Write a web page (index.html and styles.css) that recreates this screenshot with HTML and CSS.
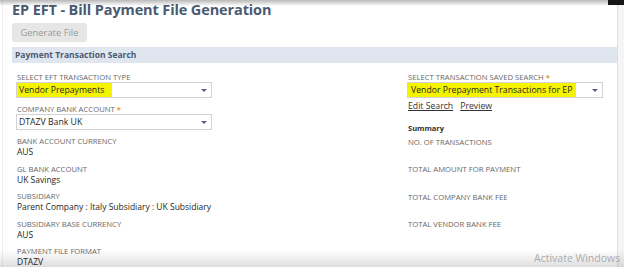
FILE: index.html
```html
<!DOCTYPE html>
<html>
<head>
<meta charset="utf-8">
<link rel="stylesheet" href="styles.css">
</head>
<body>
<div class="page">
  <div class="main">
    <h1 class="title">EP EFT - Bill Payment File Generation</h1>
    <button class="btn" type="button">Generate File</button>
    <div class="section">Payment Transaction Search</div>
    <div class="form">
      <div class="col">
        <div class="field field-sel">
          <div class="label">SELECT EFT TRANSACTION TYPE</div>
          <div class="select"><span class="hl hl-short">Vendor Prepayments</span><span class="arrow"></span></div>
        </div>
        <div class="field field-sel">
          <div class="label">COMPANY BANK ACCOUNT <span class="star">*</span></div>
          <div class="select"><span class="sel-text">DTAZV Bank UK</span><span class="arrow"></span></div>
        </div>
        <div class="field">
          <div class="label">BANK ACCOUNT CURRENCY</div>
          <div class="value">AUS</div>
        </div>
        <div class="field">
          <div class="label">GL BANK ACCOUNT</div>
          <div class="value">UK Savings</div>
        </div>
        <div class="field">
          <div class="label">SUBSIDIARY</div>
          <div class="value">Parent Company : Italy Subsidiary : UK Subsidiary</div>
        </div>
        <div class="field">
          <div class="label">SUBSIDIARY BASE CURRENCY</div>
          <div class="value">AUS</div>
        </div>
        <div class="field">
          <div class="label">PAYMENT FILE FORMAT</div>
          <div class="value">DTAZV</div>
        </div>
      </div>
      <div class="col">
        <div class="field-links">
          <div class="label">SELECT TRANSACTION SAVED SEARCH <span class="star">*</span></div>
          <div class="select"><span class="hl hl-long">Vendor Prepayment Transactions for EP</span><span class="arrow"></span></div>
          <div class="links"><a class="link">Edit Search</a><a class="link">Preview</a></div>
        </div>
        <div class="summary">Summary</div>
        <div class="field">
          <div class="label">NO. OF TRANSACTIONS</div>
          <div class="value"></div>
        </div>
        <div class="field">
          <div class="label">TOTAL AMOUNT FOR PAYMENT</div>
          <div class="value"></div>
        </div>
        <div class="field">
          <div class="label">TOTAL COMPANY BANK FEE</div>
          <div class="value"></div>
        </div>
        <div class="field">
          <div class="label">TOTAL VENDOR BANK FEE</div>
          <div class="value"></div>
        </div>
      </div>
    </div>
  </div>
  <div class="strip"></div>
  <div class="shade-top"></div>
  <div class="corner"></div>
  <div class="shade-bottom"></div>
  <div class="watermark">Activate Windows</div>
</div>
</body>
</html>
```

FILE: styles.css
```css
html, body {
  margin: 0;
  padding: 0;
  background: #ffffff;
}
body {
  width: 624px;
  height: 267px;
  overflow: hidden;
  font-family: "Open Sans", "Liberation Sans", sans-serif;
  color: #333333;
}
.page {
  position: relative;
  display: flex;
  width: 624px;
  height: 267px;
  overflow: hidden;
}
.main {
  width: 605px;
  margin-left: 2px;
  padding-left: 9px;
  border-left: 1px solid #efefef;
  display: flex;
  flex-direction: column;
  align-items: flex-start;
}
.title {
  margin: 1px 0 0 0;
  font-size: 14.5px;
  line-height: 18px;
  font-weight: 700;
  letter-spacing: -0.12px;
  color: #4a5a72;
  white-space: nowrap;
}
.btn {
  margin-top: 4px;
  width: 75px;
  height: 19px;
  padding: 0;
  border: 0;
  border-radius: 3px;
  background: #e6e6e6;
  color: #9a9a9a;
  font-family: "Open Sans", "Liberation Sans", sans-serif;
  font-size: 9.4px;
  line-height: 19px;
  text-align: center;
}
.section {
  margin-top: 5px;
  align-self: stretch;
  height: 16px;
  padding-left: 3px;
  background: #e0e6ef;
  color: #4a5a72;
  font-size: 8.5px;
  font-weight: 700;
  line-height: 16px;
}
.form {
  align-self: stretch;
  display: grid;
  grid-template-columns: 391px 1fr;
  padding-left: 4px;
  padding-top: 9px;
}
.col {
  display: flex;
  flex-direction: column;
}
.field {
  margin-bottom: 5.5px;
}
.field-sel {
  margin-bottom: 6px;
}
.label {
  padding-left: 1px;
  font-size: 7.7px;
  line-height: 10px;
  color: #686868;
  white-space: nowrap;
}
.star {
  color: #e09a2e;
  font-weight: 700;
}
.value {
  padding-left: 1px;
  height: 12px;
  font-size: 8.5px;
  line-height: 12px;
  color: #262626;
  white-space: nowrap;
}
.select {
  box-sizing: border-box;
  width: 196px;
  height: 16px;
  border: 1px solid #d2d2d2;
  background: #ffffff;
  display: flex;
  align-items: center;
}
.hl {
  background: #f6f300;
  font-size: 8.7px;
  line-height: 14px;
  padding-left: 2px;
  color: #262626;
  white-space: nowrap;
}
.hl-short {
  padding-right: 8px;
}
.hl-long {
  padding-left: 3px;
  padding-right: 4px;
}
.sel-text {
  font-size: 8.7px;
  line-height: 14px;
  padding-left: 2px;
  color: #262626;
}
.arrow {
  margin-left: auto;
  margin-right: 4px;
  width: 0;
  height: 0;
  border-left: 3.5px solid transparent;
  border-right: 3.5px solid transparent;
  border-top: 3.5px solid #51617f;
}
.links {
  display: flex;
  gap: 7px;
  margin-top: 2px;
  padding-left: 1px;
  font-size: 8.7px;
  line-height: 12px;
}
.link {
  color: #333333;
  text-decoration: underline;
}
.summary {
  margin-top: 10.5px;
  margin-bottom: 4px;
  padding-left: 1px;
  font-size: 7.5px;
  line-height: 10px;
  font-weight: 700;
  color: #333333;
}
.strip {
  flex: 1;
  background: #f5f5f5;
  border-left: 1px solid #dedede;
}
.shade-top {
  position: absolute;
  left: 0;
  top: 0;
  width: 624px;
  height: 6px;
  background: linear-gradient(to bottom, rgba(0,0,0,0.28), rgba(0,0,0,0));
}
.corner {
  position: absolute;
  right: 0;
  top: 0;
  width: 16px;
  height: 5px;
  background: #151515;
}
.shade-bottom {
  position: absolute;
  left: 0;
  bottom: 0;
  width: 624px;
  height: 17px;
  background: linear-gradient(to bottom, rgba(0,0,0,0), rgba(0,0,0,0.13));
}
.watermark {
  position: absolute;
  left: 534px;
  top: 251px;
  font-size: 10.5px;
  line-height: 14px;
  color: #ababab;
  white-space: nowrap;
}
```
